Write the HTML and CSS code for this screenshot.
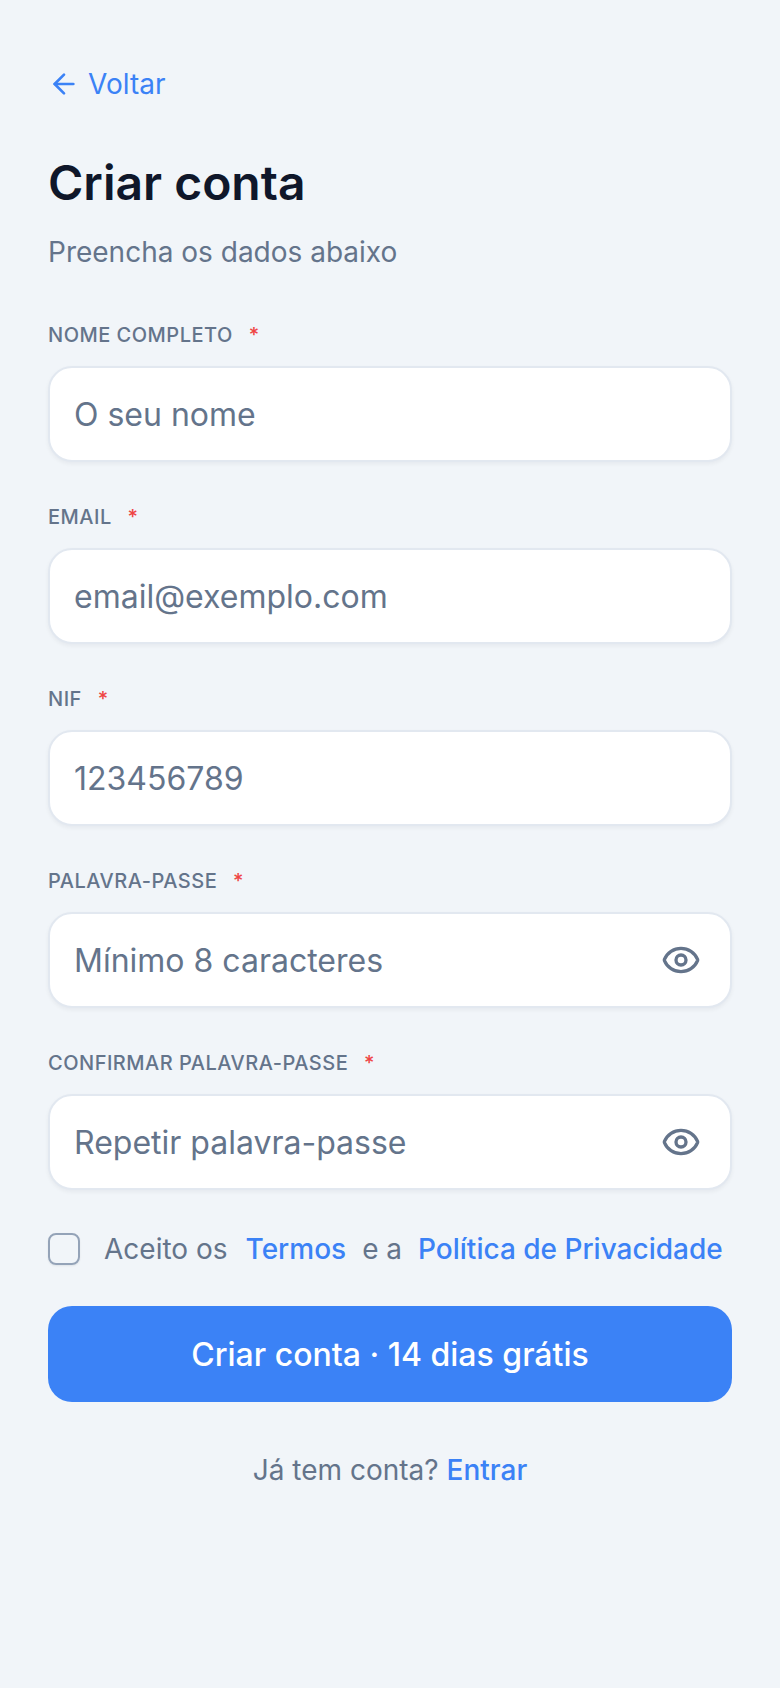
FILE: index.html
```html
<!DOCTYPE html>
<html lang="pt">
<head>
	<meta charset="utf-8">
	<title>Criar conta</title>
	<link rel="stylesheet" href="styles.css">
</head>
<body>
	<main class="page">
		<a class="back" href="#">
			<svg class="back-icon" viewBox="0 0 24 24" fill="none" stroke="currentColor" stroke-width="2" stroke-linecap="round" stroke-linejoin="round"><path d="M19 12H5"/><path d="M12 19l-7-7 7-7"/></svg>
			<span>Voltar</span>
		</a>

		<h1 class="title">Criar conta</h1>
		<p class="subtitle">Preencha os dados abaixo</p>

		<div class="field">
			<div class="label">Nome completo <span class="req">*</span></div>
			<div class="input"><span class="placeholder">O seu nome</span></div>
		</div>
		<div class="field">
			<div class="label">Email <span class="req">*</span></div>
			<div class="input"><span class="placeholder">email@exemplo.com</span></div>
		</div>
		<div class="field">
			<div class="label">NIF <span class="req">*</span></div>
			<div class="input"><span class="placeholder">123456789</span></div>
		</div>
		<div class="field">
			<div class="label">Palavra-passe <span class="req">*</span></div>
			<div class="input">
				<span class="placeholder">Mínimo 8 caracteres</span>
				<svg class="eye" viewBox="0 0 24 24" fill="none" stroke="currentColor" stroke-width="2" stroke-linecap="round" stroke-linejoin="round"><path d="M2.06 12.35a1 1 0 0 1 0-.7 10.75 10.75 0 0 1 19.88 0 1 1 0 0 1 0 .7 10.75 10.75 0 0 1-19.88 0"/><circle cx="12" cy="12" r="3"/></svg>
			</div>
		</div>
		<div class="field">
			<div class="label">Confirmar palavra-passe <span class="req">*</span></div>
			<div class="input">
				<span class="placeholder">Repetir palavra-passe</span>
				<svg class="eye" viewBox="0 0 24 24" fill="none" stroke="currentColor" stroke-width="2" stroke-linecap="round" stroke-linejoin="round"><path d="M2.06 12.35a1 1 0 0 1 0-.7 10.75 10.75 0 0 1 19.88 0 1 1 0 0 1 0 .7 10.75 10.75 0 0 1-19.88 0"/><circle cx="12" cy="12" r="3"/></svg>
			</div>
		</div>

		<div class="terms">
			<span class="checkbox"></span>
			<span class="terms-text">
				<span class="terms-start">Aceito os</span>
				<a class="link" href="#">Termos</a>
				<span>e a</span>
				<a class="link" href="#">Política de Privacidade</a>
			</span>
		</div>

		<button class="submit">Criar conta · 14 dias grátis</button>

		<p class="login">Já tem conta? <a class="login-link" href="#">Entrar</a></p>
	</main>
</body>
</html>
```

FILE: styles.css
```css
* {
	box-sizing: border-box;
}

html, body {
	margin: 0;
	background: #f1f5f9;
}

body {
	font-family: Inter, "Liberation Sans", sans-serif;
	color: #64748b;
}

.page {
	padding: 64px 48px 0;
	min-height: 1688px;
}

.back {
	display: flex;
	align-items: center;
	gap: 8px;
	height: 40px;
	color: #3b82f6;
	font-size: 28px;
	text-decoration: none;
}

.back-icon {
	width: 32px;
	height: 32px;
}

.title {
	margin: 49px 0 0;
	font-size: 48px;
	line-height: 60px;
	font-weight: 600;
	color: #0f172a;
}

.subtitle {
	margin: 21px 0 0;
	font-size: 28px;
	line-height: 36px;
	color: #64748b;
}

.field {
	margin-top: 43px;
}

.subtitle + .field {
	margin-top: 53px;
}

.label {
	font-size: 20px;
	line-height: 24px;
	font-weight: 500;
	letter-spacing: 0.5px;
	text-transform: uppercase;
	color: #64748b;
}

.req {
	margin-left: 10px;
	color: #ef4444;
}

.input {
	display: flex;
	align-items: center;
	justify-content: space-between;
	height: 96px;
	margin-top: 19px;
	padding: 0 32px 0 24px;
	background: #fff;
	border: 2px solid #e2e8f0;
	border-radius: 24px;
	box-shadow: 0 2px 4px rgba(15, 23, 42, 0.05);
	font-size: 32px;
}

.eye {
	width: 40px;
	height: 40px;
	margin-right: -3px;
}

.terms {
	display: flex;
	align-items: center;
	gap: 24px;
	margin-top: 41px;
}

.checkbox {
	flex: none;
	width: 32px;
	height: 32px;
	border: 2px solid #94a3b8;
	border-radius: 8px;
	box-shadow: 0 1px 2px rgba(15, 23, 42, 0.08);
}

.terms-text {
	display: flex;
	gap: 16px;
	font-size: 28px;
	line-height: 36px;
	white-space: nowrap;
}

.terms-start {
	margin-right: 2px;
}

.link {
	color: #3b82f6;
	font-weight: 500;
	text-decoration: none;
}

.submit {
	display: block;
	width: 100%;
	height: 96px;
	margin-top: 39px;
	border: 0;
	border-radius: 24px;
	background: #3b82f6;
	color: #fff;
	font-family: inherit;
	font-size: 32px;
	font-weight: 500;
}

.login {
	margin: 50px 0 0;
	text-align: center;
	font-size: 28px;
	line-height: 36px;
}

.login-link {
	color: #3b82f6;
	font-weight: 500;
	text-decoration: none;
}
```
